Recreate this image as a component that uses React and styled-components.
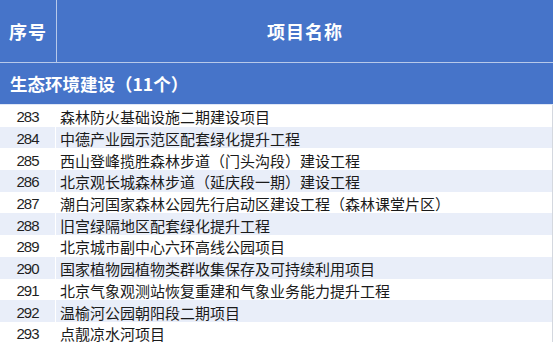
import React from "react";
import styled, { createGlobalStyle } from "styled-components";

const Global = createGlobalStyle`
  html, body { margin: 0; padding: 0; background: #fff; }
  body { font-family: "Noto Sans CJK SC", "Noto Sans", sans-serif; overflow: hidden; }
`;

const Table = styled.div`
  width: 553px;
  display: flex;
  flex-direction: column;
`;

const HeaderRow = styled.div`
  display: grid;
  grid-template-columns: 56px 1fr;
  height: 62px;
  background: #4674c9;
  border-bottom: 1px solid #b7c9ea;
`;

const HeadCell = styled.div`
  display: flex;
  align-items: center;
  justify-content: center;
  color: #fff;
  font-size: 18px;
  font-weight: 700;
  letter-spacing: 1px;
  border-left: ${(p) => (p.$divider ? "1px solid #b7c9ea" : "none")};
`;

const SectionRow = styled.div`
  height: 41px;
  background: #4674c9;
  border-bottom: 1px solid #dfe7f6;
  display: flex;
  align-items: center;
  padding-left: 10px;
  color: #fff;
  font-size: 17.5px;
  font-weight: 700;
`;

const DataRow = styled.div`
  display: grid;
  grid-template-columns: 56px 1fr;
  height: 21.7px;
  background: ${(p) => (p.$alt ? "#e9eef9" : "#ffffff")};
  border-right: 1px solid #d4d8df;
`;

const NumCell = styled.div`
  display: flex;
  align-items: center;
  justify-content: center;
  padding-top: 2px;
  font-family: "Liberation Sans", Arial, sans-serif;
  font-size: 15px;
  letter-spacing: -1px;
  color: #1f1f1f;
  border-right: 1px solid #ffffff;
`;

const NameCell = styled.div`
  display: flex;
  align-items: center;
  padding-left: 4px;
  padding-top: 2px;
  font-size: 15px;
  color: #1a1a1a;
  white-space: nowrap;
  overflow: hidden;
`;

const rows = [
  [283, "森林防火基础设施二期建设项目"],
  [284, "中德产业园示范区配套绿化提升工程"],
  [285, "西山登峰揽胜森林步道（门头沟段）建设工程"],
  [286, "北京观长城森林步道（延庆段一期）建设工程"],
  [287, "潮白河国家森林公园先行启动区建设工程（森林课堂片区）"],
  [288, "旧宫绿隔地区配套绿化提升工程"],
  [289, "北京城市副中心六环高线公园项目"],
  [290, "国家植物园植物类群收集保存及可持续利用项目"],
  [291, "北京气象观测站恢复重建和气象业务能力提升工程"],
  [292, "温榆河公园朝阳段二期项目"],
  [293, "点靓凉水河项目"],
];

export default function App() {
  return (
    <>
      <Global />
      <Table>
        <HeaderRow>
          <HeadCell>序号</HeadCell>
          <HeadCell $divider>项目名称</HeadCell>
        </HeaderRow>
        <SectionRow>生态环境建设（11个）</SectionRow>
        {rows.map(([n, name], i) => (
          <DataRow key={n} $alt={i % 2 === 1}>
            <NumCell>{n}</NumCell>
            <NameCell>{name}</NameCell>
          </DataRow>
        ))}
      </Table>
    </>
  );
}
